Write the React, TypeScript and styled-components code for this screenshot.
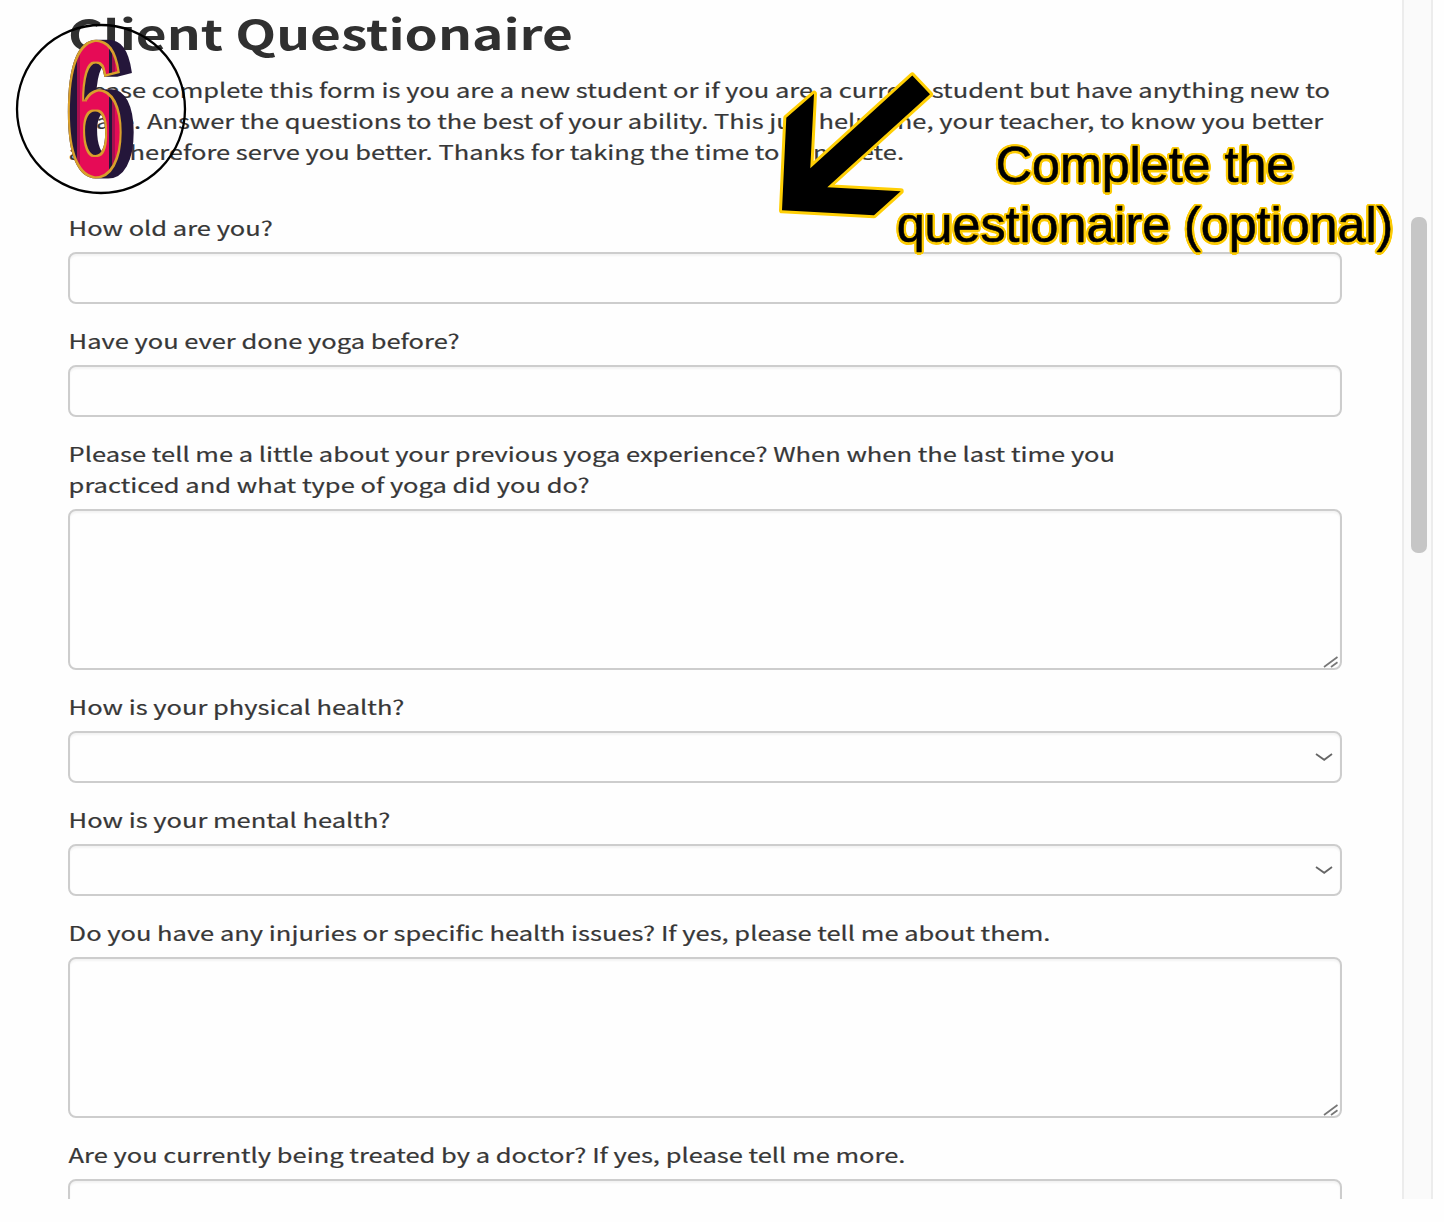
import React from 'react';
import styled, { createGlobalStyle } from 'styled-components';

type Question = {
  label: string[];
  kind: 'input' | 'textarea' | 'select';
};

const intro = [
  'Please complete this form is you are a new student or if you are a current student but have anything new to',
  'share. Answer the questions to the best of your ability. This just helps me, your teacher, to know you better',
  'and therefore serve you better. Thanks for taking the time to complete.',
];

const questions: Question[] = [
  { label: ['How old are you?'], kind: 'input' },
  { label: ['Have you ever done yoga before?'], kind: 'input' },
  {
    label: [
      'Please tell me a little about your previous yoga experience? When when the last time you',
      'practiced and what type of yoga did you do?',
    ],
    kind: 'textarea',
  },
  { label: ['How is your physical health?'], kind: 'select' },
  { label: ['How is your mental health?'], kind: 'select' },
  { label: ['Do you have any injuries or specific health issues? If yes, please tell me about them.'], kind: 'textarea' },
  { label: ['Are you currently being treated by a doctor? If yes, please tell me more.'], kind: 'input' },
];

// round outline: one shadow every 22.5 degrees
const outline = (radius: number, color: string) =>
  Array.from({ length: 16 }, (_, i) => {
    const angle = (i * Math.PI) / 8;
    return `${(Math.cos(angle) * radius).toFixed(2)}px ${(Math.sin(angle) * radius).toFixed(2)}px 0.5px ${color}`;
  }).join(', ');

const App = () => {
  return (
    <>
      <GlobalStyle />
      <Page>
        <Viewport>
          <Form>
            <Title>Client Questionaire</Title>
            <Intro>
              {intro.map(line => (
                <Line key={line}>{line}</Line>
              ))}
            </Intro>
            {questions.map(question => (
              <Field key={question.label[0]}>
                <Label>
                  {question.label.map(line => (
                    <Line key={line}>{line}</Line>
                  ))}
                </Label>
                <Control $tall={question.kind === 'textarea'}>
                  {question.kind === 'select' && (
                    <Chevron viewBox="0 0 18 8">
                      <path d="M1 1 L9.2 6.8 L17 1" />
                    </Chevron>
                  )}
                  {question.kind === 'textarea' && (
                    <Grip viewBox="0 0 16 12">
                      <path d="M1 11 L14.5 1 M8 11 L14.5 6.3" />
                    </Grip>
                  )}
                </Control>
              </Field>
            ))}
          </Form>
          <ScrollTrack>
            <ScrollThumb />
          </ScrollTrack>
        </Viewport>

        <StepBadge viewBox="0 0 172 172">
          <defs>
            <linearGradient id="face" gradientUnits="userSpaceOnUse" x1="6.5" x2="101" y1="0" y2="0">
              <stop offset="0.17" stopColor="#24163a" />
              <stop offset="0.17" stopColor="#a80f4f" />
              <stop offset="0.22" stopColor="#a80f4f" />
              <stop offset="0.22" stopColor="#e60b56" />
              <stop offset="0.76" stopColor="#e60b56" />
              <stop offset="0.76" stopColor="#24163a" />
              <stop offset="0.81" stopColor="#24163a" />
              <stop offset="0.81" stopColor="#a80f4f" />
              <stop offset="0.88" stopColor="#a80f4f" />
              <stop offset="0.88" stopColor="#e60b56" />
            </linearGradient>
            <filter id="extrude" filterUnits="userSpaceOnUse" x="0" y="0" width="172" height="172" colorInterpolationFilters="sRGB">
              <feFlood floodColor="#d9a02b" />
              <feComposite in2="SourceAlpha" operator="in" result="rim" />
              <feMorphology in="SourceAlpha" operator="erode" radius="2" result="inner" />
              <feComposite in="SourceGraphic" in2="inner" operator="in" result="fill" />
              <feFlood floodColor="#24163a" result="dark" />
              <feMorphology in="SourceAlpha" operator="dilate" radius="6 0.01" />
              <feOffset dx="6" result="side" />
              <feComposite in="dark" in2="side" operator="in" result="depth" />
              <feMerge>
                <feMergeNode in="depth" />
                <feMergeNode in="rim" />
                <feMergeNode in="fill" />
              </feMerge>
            </filter>
          </defs>
          <circle cx="86" cy="86" r="84" />
          <g filter="url(#extrude)">
            <Numeral transform="translate(49.7 151.9) scale(0.565 1)" x="0" y="0">6</Numeral>
          </g>
        </StepBadge>

        <Arrow viewBox="0 0 160 150">
          <path d="M137.3 6.5 L155 25.3 L52.3 118.3 L125.7 122.3 L99 146.3 L7 141.3 L11.3 48.7 L39 24.8 L35.3 99.3 Z" />
        </Arrow>
        <Caption>
          Complete the
          <br />
          questionaire (optional)
        </Caption>
      </Page>
    </>
  );
};

const GlobalStyle = createGlobalStyle`
  body {
    margin: 0;
    background: #fefefe;
  }
`;

const Page = styled.div`
  position: relative;
  width: 1444px;
  height: 1222px;
  overflow: hidden;
  background: #fefefe;
  color: #373737;
  font-family: 'Noto Sans CJK SC', 'Open Sans', sans-serif;
`;

const Viewport = styled.div`
  display: flex;
  height: 1199px;
  overflow: hidden;
`;

const Form = styled.main`
  box-sizing: border-box;
  flex: 0 0 1402px;
  padding: 2px 60px 0 68px;
`;

const Title = styled.h1`
  width: max-content;
  margin: 0 0 12px;
  font-size: 41px;
  font-weight: 700;
  line-height: 60px;
  white-space: nowrap;
  color: #303030;
  transform: scaleX(1.297);
  transform-origin: left;
`;

const Intro = styled.div`
  margin-bottom: 45px;
`;

const Line = styled.span`
  display: block;
  width: max-content;
  font-size: 20px;
  font-weight: 400;
  line-height: 31px;
  white-space: nowrap;
  -webkit-text-stroke: 0.2px #373737;
  transform: translate(0.6px, 0.4px) scaleX(1.2745);
  transform-origin: left;
`;

const Field = styled.div`
  margin-bottom: 21px;
`;

const Label = styled.div`
  margin-bottom: 9px;
`;

const Control = styled.div<{ $tall: boolean }>`
  display: flex;
  justify-content: flex-end;
  align-items: ${({ $tall }) => ($tall ? 'flex-end' : 'center')};
  box-sizing: border-box;
  height: ${({ $tall }) => ($tall ? 161 : 52)}px;
  width: 1274px;
  border: 2px solid #cdcdcd;
  border-radius: 8px;
  box-shadow: inset 0 2px 2px #f3f3f3;
`;

const Chevron = styled.svg`
  width: 18px;
  height: 8px;
  margin-right: 7px;
  fill: none;
  stroke: #666;
  stroke-width: 1.8;
`;

const Grip = styled.svg`
  width: 16px;
  height: 12px;
  margin-right: 1px;
  fill: none;
  stroke: #777;
  stroke-width: 1.7;
`;

const ScrollTrack = styled.div`
  box-sizing: border-box;
  width: 31px;
  padding: 217px 5px 0 7px;
  border: solid #ececec;
  border-width: 0 2px;
  background: #fafafa;
`;

const ScrollThumb = styled.div`
  width: 16px;
  height: 336px;
  border-radius: 7px;
  background: #c6c6c6;
`;

const StepBadge = styled.svg`
  position: absolute;
  left: 15px;
  top: 23px;
  width: 172px;
  height: 172px;

  circle {
    fill: none;
    stroke: #000;
    stroke-width: 2.3;
  }
`;

const Numeral = styled.text`
  fill: url(#face);
  stroke: url(#face);
  stroke-width: 3;
  font-family: 'Liberation Sans', sans-serif;
  font-size: 191px;
  font-weight: 700;
`;

const Arrow = styled.svg`
  position: absolute;
  left: 775px;
  top: 69px;
  width: 160px;
  height: 150px;

  path {
    fill: #000;
    stroke: #ffcf05;
    stroke-width: 6;
    stroke-linejoin: round;
    paint-order: stroke;
  }
`;

const Caption = styled.div`
  position: absolute;
  left: 880px;
  top: 135px;
  width: 530px;
  font-family: 'Liberation Sans', Arial, sans-serif;
  font-size: 50.2px;
  line-height: 60px;
  text-align: center;
  color: #000;
  -webkit-text-stroke: 0.6px #000;
  text-shadow: ${outline(2.5, '#fccb04')};
`;

export default App;
